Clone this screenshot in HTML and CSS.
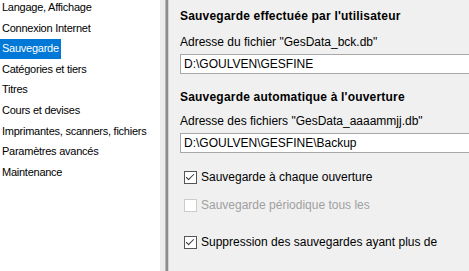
FILE: index.html
```html
<!DOCTYPE html>
<html lang="fr">
<head>
    <meta charset="UTF-8">
    <title>Options - Sauvegarde</title>
    <link rel="stylesheet" href="styles.css">
</head>
<body>
    <div class="window">
        <ul class="nav">
            <li>Langage, Affichage</li>
            <li>Connexion Internet</li>
            <li class="selected">Sauvegarde</li>
            <li>Catégories et tiers</li>
            <li>Titres</li>
            <li>Cours et devises</li>
            <li>Imprimantes, scanners, fichiers</li>
            <li>Paramètres avancés</li>
            <li>Maintenance</li>
        </ul>
        <div class="splitter"></div>
        <div class="panel">
            <h2 class="section-title">Sauvegarde effectuée par l'utilisateur</h2>
            <div class="label">Adresse du fichier "GesData_bck.db"</div>
            <div class="textbox">D:\GOULVEN\GESFINE</div>

            <h2 class="section-title second">Sauvegarde automatique à l'ouverture</h2>
            <div class="label second">Adresse des fichiers "GesData_aaaammjj.db"</div>
            <div class="textbox">D:\GOULVEN\GESFINE\Backup</div>

            <label class="check first">
                <span class="box checked"></span>
                Sauvegarde à chaque ouverture
            </label>
            <label class="check disabled">
                <span class="box"></span>
                Sauvegarde périodique tous les
            </label>
            <label class="check spaced">
                <span class="box checked"></span>
                Suppression des sauvegardes ayant plus de
            </label>
        </div>
    </div>
</body>
</html>
```

FILE: styles.css
```css
body {
    margin: 0;
    font-family: "Liberation Sans", Arial, sans-serif;
    font-size: 12px;
    color: #000;
    background: #f0f0f0;
    overflow: hidden;
}
.window {
    display: flex;
    height: 271px;
}
.nav {
    list-style: none;
    margin: 0;
    padding: 0;
    width: 160px;
    background: #ffffff;
    flex-shrink: 0;
    font-size: 11px;
    letter-spacing: -0.25px;
}
.nav li {
    display: table;
    height: 19.6px;
    line-height: 19.6px;
    padding: 0 2px;
    margin-top: 1px;
    white-space: nowrap;
}
.nav li:first-child {
    margin-top: -2px;
}
.nav li.selected {
    background: #0078d7;
    color: #ffffff;
}
.splitter {
    width: 8px;
    flex-shrink: 0;
    background: #ececec;
    border-right: 1px solid #d4d4d4;
    box-shadow: inset -2px 0 0 #8c8c8c, inset -3px 0 0 #b8b8b8;
}
.panel {
    flex: 1;
    padding: 9px 0 0 11px;
    min-width: 0;
}
.section-title {
    margin: 0;
    font-size: 12px;
    font-weight: bold;
    line-height: 14px;
    letter-spacing: 0.2px;
}
.section-title.second {
    margin-top: 16px;
}
.label {
    margin-top: 12px;
    line-height: 14px;
}
.label.second {
    margin-top: 10px;
}
.textbox {
    margin-top: 5px;
    height: 18px;
    line-height: 18px;
    background: #ffffff;
    border: 1px solid #a8a8a8;
    border-right: none;
    padding-left: 3px;
    margin-right: -20px;
    white-space: nowrap;
}
.check {
    display: flex;
    align-items: center;
    gap: 4px;
    padding-left: 4px;
    height: 14px;
}
.check.first {
    margin-top: 17px;
}
.check.disabled {
    margin-top: 14px;
    color: #a0a0a0;
}
.check.spaced {
    margin-top: 23px;
}
.box {
    width: 11px;
    height: 11px;
    border: 1px solid #555555;
    background: #ffffff;
    position: relative;
}
.check.disabled .box {
    border-color: #cccccc;
}
.box.checked::after {
    content: "";
    position: absolute;
    left: 3px;
    top: 0px;
    width: 3px;
    height: 7px;
    border: solid #333333;
    border-width: 0 1px 1px 0;
    transform: rotate(45deg);
}
```
